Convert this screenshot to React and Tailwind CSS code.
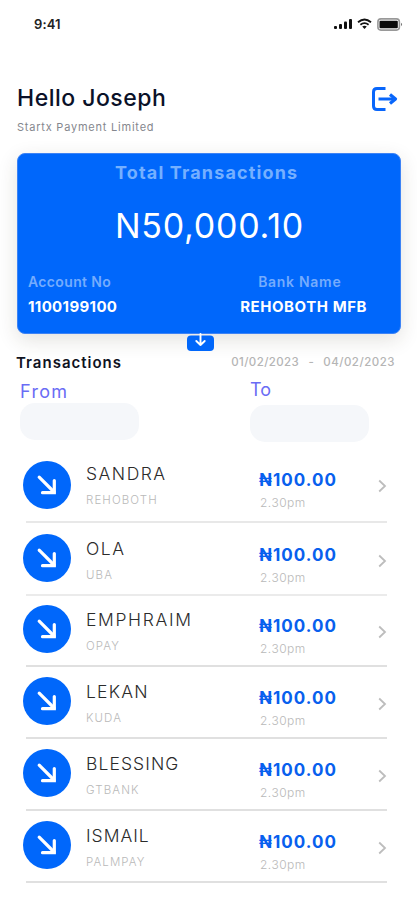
// App.jsx
import React from 'react';

const transactions = [
  { name: 'SANDRA', bank: 'REHOBOTH', amount: '₦100.00', time: '2.30pm', row: 'h-[73px]', text: 'pb-[13px]', track: 'tracking-[1.5px]', line: 'border-[#e8e8e8]' },
  { name: 'OLA', bank: 'UBA', amount: '₦100.00', time: '2.30pm', row: 'h-[73px]', text: 'pb-[11px]', track: 'tracking-[1.5px]', line: 'border-[#ebebeb]' },
  { name: 'EMPHRAIM', bank: 'OPAY', amount: '₦100.00', time: '2.30pm', row: 'h-[71px]', text: 'pb-[11px]', track: 'tracking-[1.65px]', line: 'border-[#e0e0e0]' },
  { name: 'LEKAN', bank: 'KUDA', amount: '₦100.00', time: '2.30pm', row: 'h-[72px]', text: 'pb-[11px]', track: 'tracking-[1.2px]', line: 'border-[#e0e0e0]' },
  { name: 'BLESSING', bank: 'GTBANK', amount: '₦100.00', time: '2.30pm', row: 'h-[72px]', text: 'pb-[11px]', track: 'tracking-[1.1px]', line: 'border-[#e0e0e0]' },
  { name: 'ISMAIL', bank: 'PALMPAY', amount: '₦100.00', time: '2.30pm', row: 'h-[72px]', text: 'pb-[11px]', track: 'tracking-[1px]', line: 'border-[#e0e0e0]' },
];

function StatusBar() {
  return (
    <div className="flex h-12 items-center justify-between pl-[34px] pr-[14px]">
      <span className="pt-px text-[13px] font-semibold tracking-[0.1px] text-[#222]">9:41</span>
      <div className="flex items-center gap-[5px]">
        <svg width="18" height="12" viewBox="0 0 18 12" fill="#111">
          <rect x="0" y="8" width="3" height="3" rx="1" />
          <rect x="5" y="6" width="3" height="5" rx="1" />
          <rect x="10" y="3.5" width="3" height="7.5" rx="1" />
          <rect x="15" y="1" width="3" height="10" rx="1" />
        </svg>
        <svg width="15" height="12" viewBox="0 0 15 12" fill="none" stroke="#111" strokeWidth="1.8">
          <path d="M1 4.3Q7.5 -1.4 14 4.3" />
          <path d="M3.4 6.8Q7.5 3.4 11.6 6.8" />
          <path d="M5.2 8.6Q7.5 6.9 9.8 8.6L7.5 11Z" fill="#111" stroke="none" />
        </svg>
        <svg width="26" height="13" viewBox="0 0 26 13">
          <rect x="0.9" y="0.9" width="21.5" height="11.2" rx="3" fill="none" stroke="#999" strokeWidth="1.6" />
          <rect x="2.5" y="2.7" width="18.3" height="7.6" rx="1" fill="#0b0b0b" />
          <path d="M24 4.8Q26.2 6.5 24 8.2Z" fill="#777" />
        </svg>
      </div>
    </div>
  );
}

function Header() {
  return (
    <div className="flex h-[105px] items-start justify-between pl-[17px] pr-[19px] pt-9">
      <div>
        <h1 className="text-[23px] font-medium leading-7 tracking-[0.5px] text-[#0a1128]">Hello Joseph</h1>
        <p className="mt-2 text-[11px] leading-[14px] tracking-[0.78px] text-[#85878e]">Startx Payment Limited</p>
      </div>
      <svg className="mt-[2px]" width="27" height="26" viewBox="0 0 27 26" fill="none" stroke="#0866fb">
        <path d="M14.5 2.5H6Q2.5 2.5 2.5 6V20Q2.5 23.5 6 23.5H14.5" strokeWidth="3" />
        <path d="M7.5 13H22" strokeWidth="3" />
        <path d="M19 8.5L24.5 13L19 17.5" strokeWidth="3.2" strokeLinejoin="round" />
      </svg>
    </div>
  );
}

function BalanceCard() {
  return (
    <div className="relative ml-[17px] mr-4 h-[181px] rounded-[8px] border border-[#3d83f5] bg-[#0067fb] shadow-[0_6px_20px_rgba(60,50,30,0.14)]">
      <p className="pl-[97px] pt-[7px] text-[18px] font-bold leading-6 tracking-[1.15px] text-[#75b0ff]">Total Transactions</p>
      <p className="pl-[97px] pt-[21px] text-[34px] leading-10 tracking-[0.75px] text-white">N50,000.10</p>
      <div className="flex justify-between pl-[10px] pr-[33px] pt-[26px]">
        <div>
          <p className="text-[14px] font-semibold leading-5 tracking-[0.35px] text-[#75acfd]">Account No</p>
          <p className="mt-[5px] text-[15px] font-bold leading-5 tracking-[0.35px] text-white">1100199100</p>
        </div>
        <div>
          <p className="pl-[18px] text-[14px] font-semibold leading-5 tracking-[0.7px] text-[#75acfd]">Bank Name</p>
          <p className="mt-[5px] text-[15px] font-bold leading-5 tracking-[0.55px] text-white">REHOBOTH MFB</p>
        </div>
      </div>
      <div className="absolute left-[169px] top-[179px] h-[18px] w-[27px]">
        <svg width="27" height="18" viewBox="0 0 27 18" fill="none">
          <rect x="0" y="2.5" width="27" height="15.5" rx="4" fill="#0067fb" />
          <path d="M13.5 1V12M9.3 8L13.5 12L17.7 8" stroke="#fff" strokeWidth="1.9" strokeLinecap="round" strokeLinejoin="round" />
        </svg>
      </div>
    </div>
  );
}

function Filters() {
  return (
    <div className="h-[116px] pt-[19px]">
      <div className="flex items-center justify-between pl-4 pr-[22px]">
        <h2 className="text-[15px] font-semibold leading-5 tracking-[1px] text-[#10131f]">Transactions</h2>
        <div className="flex text-[11.5px] font-medium text-[#b5b5b5]">
          <span className="tracking-[0.4px]">01/02/2023</span>
          <span className="w-[24px] text-center">-</span>
          <span className="tracking-[0.5px]">04/02/2023</span>
        </div>
      </div>
      <div className="flex pl-5">
        <div className="w-[230px]">
          <p className="mt-[8px] text-[18px] leading-[22px] tracking-[1.3px] text-[#6a6cf5]">From</p>
          <div className="h-[37px] w-[119px] rounded-[15px] bg-[#f5f7fa]" />
        </div>
        <div>
          <p className="mt-[6px] text-[18px] leading-[22px] text-[#6a6cf5]">To</p>
          <div className="mt-[4px] h-[37px] w-[119px] rounded-[15px] bg-[#f5f7fa]" />
        </div>
      </div>
    </div>
  );
}

function TransactionRow({ item }) {
  return (
    <div className={`ml-[26px] mr-[30px] flex items-end border-b-2 ${item.row} ${item.line}`}>
      <div className="mb-3 -ml-[3px] flex size-12 shrink-0 items-center justify-center rounded-full bg-[#0067fb]">
        <svg width="22" height="22" viewBox="0 0 22 22" fill="none" stroke="#fff" strokeWidth="3.2" strokeLinecap="round">
          <path d="M3.2 3.2L18 18" />
          <path d="M18.3 6.5V18.7H6.5" />
        </svg>
      </div>
      <div className={`ml-[15px] w-[172px] ${item.text}`}>
        <p className={`text-[17.5px] font-light leading-5 text-[#2b2b2b] ${item.track}`}>{item.name}</p>
        <p className="mt-2 text-[11.5px] font-light leading-4 tracking-[1.1px] text-[#b9b9b9]">{item.bank}</p>
      </div>
      <div className={`w-[113px] ${item.text}`}>
        <p className="pl-px text-[17px] font-bold leading-5 tracking-[1.05px] text-[#0860ee]">{item.amount}</p>
        <p className="mt-[6px] -mb-[2px] pl-[2px] text-[12px] font-light leading-[14px] tracking-[0.5px] text-[#b9b9b9]">{item.time}</p>
      </div>
      <div className={`ml-[7px] ${item.text}`}>
        <svg className="mb-[15px]" width="9" height="14" viewBox="0 0 9 14" fill="none" stroke="#bdbdbd" strokeWidth="1.8">
          <path d="M1.2 1.5L7 7L1.2 12.5" />
        </svg>
      </div>
    </div>
  );
}

export default function App() {
  return (
    <div className="h-[900px] w-[417px] overflow-hidden bg-white font-['Inter','Noto_Sans',sans-serif]">
      <StatusBar />
      <Header />
      <BalanceCard />
      <Filters />
      {transactions.map((item) => (
        <TransactionRow key={item.name} item={item} />
      ))}
    </div>
  );
}
